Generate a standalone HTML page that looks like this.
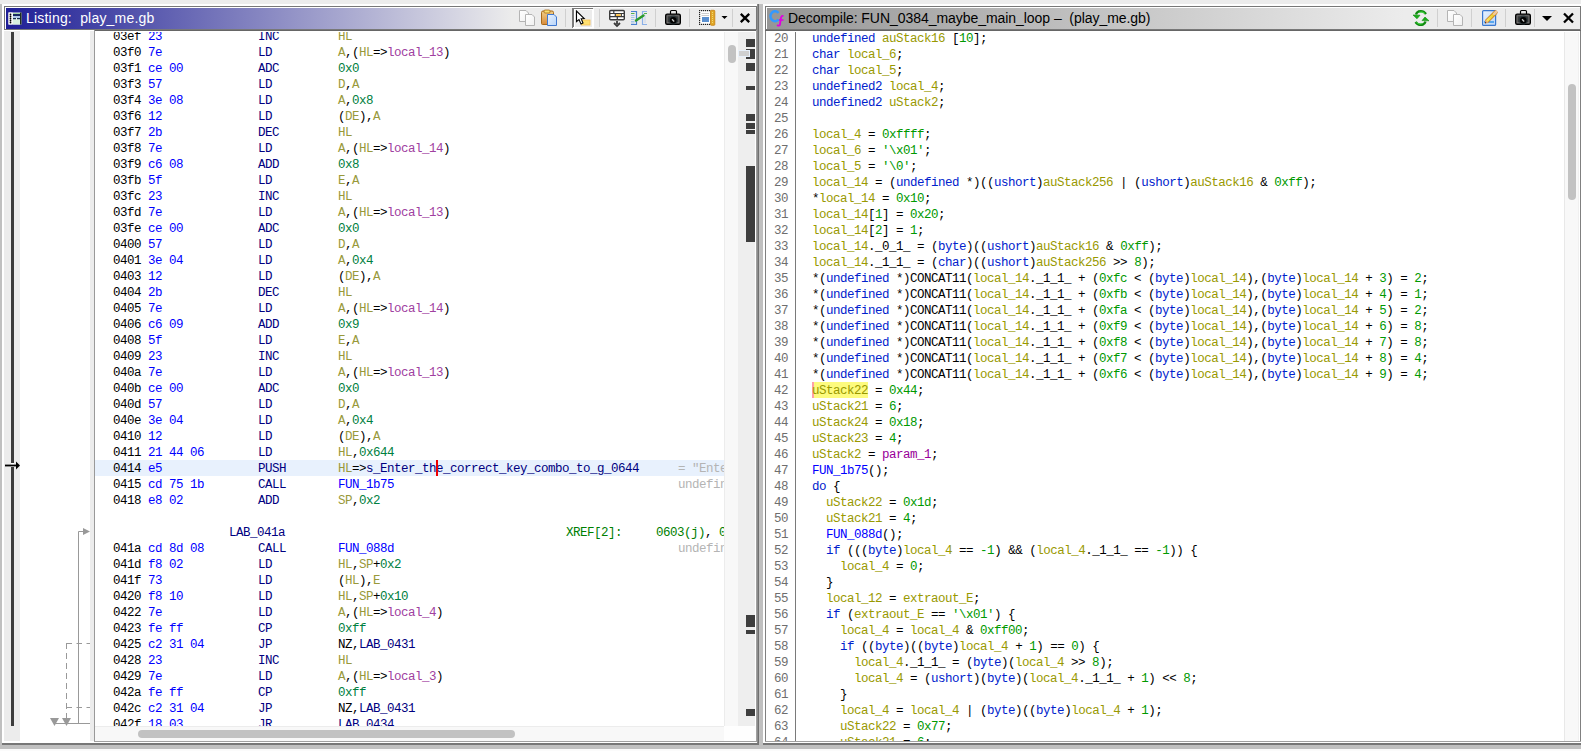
<!DOCTYPE html>
<html><head><meta charset="utf-8">
<style>
html,body{margin:0;padding:0}
body{width:1581px;height:751px;overflow:hidden;position:relative;background:#ececec;font-family:"Liberation Sans",sans-serif}
.a{position:absolute}
.t{position:absolute;white-space:pre;font-family:'Liberation Mono', monospace;font-size:12.5px;letter-spacing:-0.5px;line-height:16px;padding-top:1px;height:16px}
.clip{position:absolute;overflow:hidden}
.ttl{position:absolute;font-family:"Liberation Sans",sans-serif;font-size:14px;white-space:pre}
.sep{position:absolute;top:9px;width:1px;height:18px;background:#c8c8c8}
</style></head><body>
<!-- base frame -->
<div class="a" style="left:0;top:4px;width:2px;height:741px;background:#c0c0c0"></div>
<div class="a" style="left:2px;top:4px;width:1579px;height:741px;background:#fff"></div>
<div class="a" style="left:0;top:745px;width:1581px;height:4px;background:#c0c0c0"></div>
<div class="a" style="left:0;top:749px;width:1581px;height:2px;background:#fbfbfb"></div>
<!-- splitter -->
<div class="a" style="left:757px;top:4px;width:1px;height:741px;background:#8c8c8c"></div>
<div class="a" style="left:758px;top:4px;width:1px;height:741px;background:#707070"></div>
<div class="a" style="left:759px;top:4px;width:4px;height:745px;background:#c0c0c0"></div>
<div class="a" style="left:2px;top:743px;width:757px;height:2px;background:#777"></div>
<div class="a" style="left:763px;top:743px;width:818px;height:2px;background:#777"></div>

<!-- ================= LISTING PANEL ================= -->
<div class="a" style="left:4px;top:6px;width:753px;height:24px;box-sizing:border-box;border:1px solid #787878;background:#fff"></div>
<div class="a" style="left:6px;top:8px;width:750px;height:21px;background:linear-gradient(to right,#1f1f96 0px,#ececec 506px,#ececec 100%)"></div>
<!-- listing icon -->
<svg class="a" style="left:8px;top:12px" width="14" height="13" viewBox="0 0 14 13">
 <rect x="0.5" y="0.5" width="13" height="12" fill="#f0f4f0"/>
 <rect x="0.5" y="0.5" width="4" height="12" fill="#fafafa"/>
 <circle cx="2.5" cy="2.5" r="0.9" fill="#000"/><circle cx="2.5" cy="4.5" r="0.9" fill="#000"/><circle cx="2.5" cy="6.5" r="0.9" fill="#000"/><circle cx="2.5" cy="8.5" r="0.9" fill="#000"/><circle cx="2.5" cy="10.5" r="0.9" fill="#000"/>
 <rect x="5" y="1" width="7" height="1" fill="#a8d8a8"/>
 <rect x="5" y="2" width="7" height="2" fill="#1a2a60"/>
 <rect x="5" y="4" width="7" height="2" fill="#b0c8e8"/>
 <rect x="5" y="6" width="3" height="1.5" fill="#1a3050"/><rect x="9" y="6" width="3" height="1.5" fill="#1a3050"/>
 <rect x="5" y="7.5" width="7" height="5" fill="#d8f0e0"/>
 <rect x="12" y="0.5" width="1.5" height="12" fill="#203020"/>
</svg>
<div class="ttl" id="lt" style="left:26px;top:10px;color:#fff;font-size:14px;letter-spacing:0.2px;line-height:16px">Listing:&nbsp; play_me.gb</div>


<!-- listing content -->
<div class="a" style="left:4px;top:31px;width:16px;height:710px;background:#ececec"></div>
<div class="a" style="left:94px;top:30px;width:663px;height:1px;background:#666"></div>
<div class="a" style="left:11px;top:32px;width:3px;height:694px;background:#3c3c3c"></div>
<div class="a" style="left:11px;top:463px;width:3px;height:4px;background:#fff"></div>
<svg class="a" style="left:4px;top:460px" width="17" height="11" viewBox="0 0 17 11"><rect x="1" y="4.6" width="12" height="1.8" fill="#000"/><path d="M12 1.5 L16 5.5 L12 9.5 Z" fill="#000"/></svg>
<div class="a" style="left:90px;top:31px;width:4px;height:710px;background:#ececec"></div>
<div class="a" style="left:94px;top:30px;width:1px;height:711px;background:#999"></div>
<!-- flow arrows -->
<svg class="a" style="left:40px;top:500px" width="50" height="230" viewBox="0 0 50 230">
 <path d="M38.5 223.5 V31.5 H43" stroke="#999" fill="none"/>
 <path d="M43 28 L50 31.5 L43 35 Z" fill="#999"/>
 <path d="M26.5 143.5 H50" stroke="#999" fill="none" stroke-dasharray="5.5,4.5"/>
 <path d="M26.5 143 V220" stroke="#999" fill="none" stroke-dasharray="6,4"/>
 <path d="M26.5 207.5 H50" stroke="#999" fill="none" stroke-dasharray="5.5,4.5"/>
 <path d="M14.5 223.5 H50" stroke="#999" fill="none"/>
 <path d="M10 218 L19 218 L14.5 226 Z" fill="#999"/>
 <path d="M22 218 L31 218 L26.5 226 Z" fill="#999"/>
</svg>
<div class="clip" style="left:95px;top:32px;width:629px;height:694px">
 <div class="a" style="left:-95px;top:-32px;width:1581px;height:751px">
<div class="t" style="left:113px;top:28px;"><span style="color:#000000">03ef</span></div>
<div class="t" style="left:148px;top:28px;"><span style="color:#0000ff">23</span></div>
<div class="t" style="left:258px;top:28px;"><span style="color:#000080">INC</span></div>
<div class="t" style="left:338px;top:28px;"><span style="color:#99993a">HL</span></div>
<div class="t" style="left:113px;top:44px;"><span style="color:#000000">03f0</span></div>
<div class="t" style="left:148px;top:44px;"><span style="color:#0000ff">7e</span></div>
<div class="t" style="left:258px;top:44px;"><span style="color:#000080">LD</span></div>
<div class="t" style="left:338px;top:44px;"><span style="color:#99993a">A</span>,(<span style="color:#99993a">HL</span>=&gt;<span style="color:#a040a0">local_13</span>)</div>
<div class="t" style="left:113px;top:60px;"><span style="color:#000000">03f1</span></div>
<div class="t" style="left:148px;top:60px;"><span style="color:#0000ff">ce 00</span></div>
<div class="t" style="left:258px;top:60px;"><span style="color:#000080">ADC</span></div>
<div class="t" style="left:338px;top:60px;"><span style="color:#008040">0x0</span></div>
<div class="t" style="left:113px;top:76px;"><span style="color:#000000">03f3</span></div>
<div class="t" style="left:148px;top:76px;"><span style="color:#0000ff">57</span></div>
<div class="t" style="left:258px;top:76px;"><span style="color:#000080">LD</span></div>
<div class="t" style="left:338px;top:76px;"><span style="color:#99993a">D</span>,<span style="color:#99993a">A</span></div>
<div class="t" style="left:113px;top:92px;"><span style="color:#000000">03f4</span></div>
<div class="t" style="left:148px;top:92px;"><span style="color:#0000ff">3e 08</span></div>
<div class="t" style="left:258px;top:92px;"><span style="color:#000080">LD</span></div>
<div class="t" style="left:338px;top:92px;"><span style="color:#99993a">A</span>,<span style="color:#008040">0x8</span></div>
<div class="t" style="left:113px;top:108px;"><span style="color:#000000">03f6</span></div>
<div class="t" style="left:148px;top:108px;"><span style="color:#0000ff">12</span></div>
<div class="t" style="left:258px;top:108px;"><span style="color:#000080">LD</span></div>
<div class="t" style="left:338px;top:108px;">(<span style="color:#99993a">DE</span>),<span style="color:#99993a">A</span></div>
<div class="t" style="left:113px;top:124px;"><span style="color:#000000">03f7</span></div>
<div class="t" style="left:148px;top:124px;"><span style="color:#0000ff">2b</span></div>
<div class="t" style="left:258px;top:124px;"><span style="color:#000080">DEC</span></div>
<div class="t" style="left:338px;top:124px;"><span style="color:#99993a">HL</span></div>
<div class="t" style="left:113px;top:140px;"><span style="color:#000000">03f8</span></div>
<div class="t" style="left:148px;top:140px;"><span style="color:#0000ff">7e</span></div>
<div class="t" style="left:258px;top:140px;"><span style="color:#000080">LD</span></div>
<div class="t" style="left:338px;top:140px;"><span style="color:#99993a">A</span>,(<span style="color:#99993a">HL</span>=&gt;<span style="color:#a040a0">local_14</span>)</div>
<div class="t" style="left:113px;top:156px;"><span style="color:#000000">03f9</span></div>
<div class="t" style="left:148px;top:156px;"><span style="color:#0000ff">c6 08</span></div>
<div class="t" style="left:258px;top:156px;"><span style="color:#000080">ADD</span></div>
<div class="t" style="left:338px;top:156px;"><span style="color:#008040">0x8</span></div>
<div class="t" style="left:113px;top:172px;"><span style="color:#000000">03fb</span></div>
<div class="t" style="left:148px;top:172px;"><span style="color:#0000ff">5f</span></div>
<div class="t" style="left:258px;top:172px;"><span style="color:#000080">LD</span></div>
<div class="t" style="left:338px;top:172px;"><span style="color:#99993a">E</span>,<span style="color:#99993a">A</span></div>
<div class="t" style="left:113px;top:188px;"><span style="color:#000000">03fc</span></div>
<div class="t" style="left:148px;top:188px;"><span style="color:#0000ff">23</span></div>
<div class="t" style="left:258px;top:188px;"><span style="color:#000080">INC</span></div>
<div class="t" style="left:338px;top:188px;"><span style="color:#99993a">HL</span></div>
<div class="t" style="left:113px;top:204px;"><span style="color:#000000">03fd</span></div>
<div class="t" style="left:148px;top:204px;"><span style="color:#0000ff">7e</span></div>
<div class="t" style="left:258px;top:204px;"><span style="color:#000080">LD</span></div>
<div class="t" style="left:338px;top:204px;"><span style="color:#99993a">A</span>,(<span style="color:#99993a">HL</span>=&gt;<span style="color:#a040a0">local_13</span>)</div>
<div class="t" style="left:113px;top:220px;"><span style="color:#000000">03fe</span></div>
<div class="t" style="left:148px;top:220px;"><span style="color:#0000ff">ce 00</span></div>
<div class="t" style="left:258px;top:220px;"><span style="color:#000080">ADC</span></div>
<div class="t" style="left:338px;top:220px;"><span style="color:#008040">0x0</span></div>
<div class="t" style="left:113px;top:236px;"><span style="color:#000000">0400</span></div>
<div class="t" style="left:148px;top:236px;"><span style="color:#0000ff">57</span></div>
<div class="t" style="left:258px;top:236px;"><span style="color:#000080">LD</span></div>
<div class="t" style="left:338px;top:236px;"><span style="color:#99993a">D</span>,<span style="color:#99993a">A</span></div>
<div class="t" style="left:113px;top:252px;"><span style="color:#000000">0401</span></div>
<div class="t" style="left:148px;top:252px;"><span style="color:#0000ff">3e 04</span></div>
<div class="t" style="left:258px;top:252px;"><span style="color:#000080">LD</span></div>
<div class="t" style="left:338px;top:252px;"><span style="color:#99993a">A</span>,<span style="color:#008040">0x4</span></div>
<div class="t" style="left:113px;top:268px;"><span style="color:#000000">0403</span></div>
<div class="t" style="left:148px;top:268px;"><span style="color:#0000ff">12</span></div>
<div class="t" style="left:258px;top:268px;"><span style="color:#000080">LD</span></div>
<div class="t" style="left:338px;top:268px;">(<span style="color:#99993a">DE</span>),<span style="color:#99993a">A</span></div>
<div class="t" style="left:113px;top:284px;"><span style="color:#000000">0404</span></div>
<div class="t" style="left:148px;top:284px;"><span style="color:#0000ff">2b</span></div>
<div class="t" style="left:258px;top:284px;"><span style="color:#000080">DEC</span></div>
<div class="t" style="left:338px;top:284px;"><span style="color:#99993a">HL</span></div>
<div class="t" style="left:113px;top:300px;"><span style="color:#000000">0405</span></div>
<div class="t" style="left:148px;top:300px;"><span style="color:#0000ff">7e</span></div>
<div class="t" style="left:258px;top:300px;"><span style="color:#000080">LD</span></div>
<div class="t" style="left:338px;top:300px;"><span style="color:#99993a">A</span>,(<span style="color:#99993a">HL</span>=&gt;<span style="color:#a040a0">local_14</span>)</div>
<div class="t" style="left:113px;top:316px;"><span style="color:#000000">0406</span></div>
<div class="t" style="left:148px;top:316px;"><span style="color:#0000ff">c6 09</span></div>
<div class="t" style="left:258px;top:316px;"><span style="color:#000080">ADD</span></div>
<div class="t" style="left:338px;top:316px;"><span style="color:#008040">0x9</span></div>
<div class="t" style="left:113px;top:332px;"><span style="color:#000000">0408</span></div>
<div class="t" style="left:148px;top:332px;"><span style="color:#0000ff">5f</span></div>
<div class="t" style="left:258px;top:332px;"><span style="color:#000080">LD</span></div>
<div class="t" style="left:338px;top:332px;"><span style="color:#99993a">E</span>,<span style="color:#99993a">A</span></div>
<div class="t" style="left:113px;top:348px;"><span style="color:#000000">0409</span></div>
<div class="t" style="left:148px;top:348px;"><span style="color:#0000ff">23</span></div>
<div class="t" style="left:258px;top:348px;"><span style="color:#000080">INC</span></div>
<div class="t" style="left:338px;top:348px;"><span style="color:#99993a">HL</span></div>
<div class="t" style="left:113px;top:364px;"><span style="color:#000000">040a</span></div>
<div class="t" style="left:148px;top:364px;"><span style="color:#0000ff">7e</span></div>
<div class="t" style="left:258px;top:364px;"><span style="color:#000080">LD</span></div>
<div class="t" style="left:338px;top:364px;"><span style="color:#99993a">A</span>,(<span style="color:#99993a">HL</span>=&gt;<span style="color:#a040a0">local_13</span>)</div>
<div class="t" style="left:113px;top:380px;"><span style="color:#000000">040b</span></div>
<div class="t" style="left:148px;top:380px;"><span style="color:#0000ff">ce 00</span></div>
<div class="t" style="left:258px;top:380px;"><span style="color:#000080">ADC</span></div>
<div class="t" style="left:338px;top:380px;"><span style="color:#008040">0x0</span></div>
<div class="t" style="left:113px;top:396px;"><span style="color:#000000">040d</span></div>
<div class="t" style="left:148px;top:396px;"><span style="color:#0000ff">57</span></div>
<div class="t" style="left:258px;top:396px;"><span style="color:#000080">LD</span></div>
<div class="t" style="left:338px;top:396px;"><span style="color:#99993a">D</span>,<span style="color:#99993a">A</span></div>
<div class="t" style="left:113px;top:412px;"><span style="color:#000000">040e</span></div>
<div class="t" style="left:148px;top:412px;"><span style="color:#0000ff">3e 04</span></div>
<div class="t" style="left:258px;top:412px;"><span style="color:#000080">LD</span></div>
<div class="t" style="left:338px;top:412px;"><span style="color:#99993a">A</span>,<span style="color:#008040">0x4</span></div>
<div class="t" style="left:113px;top:428px;"><span style="color:#000000">0410</span></div>
<div class="t" style="left:148px;top:428px;"><span style="color:#0000ff">12</span></div>
<div class="t" style="left:258px;top:428px;"><span style="color:#000080">LD</span></div>
<div class="t" style="left:338px;top:428px;">(<span style="color:#99993a">DE</span>),<span style="color:#99993a">A</span></div>
<div class="t" style="left:113px;top:444px;"><span style="color:#000000">0411</span></div>
<div class="t" style="left:148px;top:444px;"><span style="color:#0000ff">21 44 06</span></div>
<div class="t" style="left:258px;top:444px;"><span style="color:#000080">LD</span></div>
<div class="t" style="left:338px;top:444px;"><span style="color:#99993a">HL</span>,<span style="color:#008040">0x644</span></div>
<div style="position:absolute;left:95px;top:460px;width:629px;height:16px;background:#e8f1fd"></div>
<div class="t" style="left:113px;top:460px;"><span style="color:#000000">0414</span></div>
<div class="t" style="left:148px;top:460px;"><span style="color:#0000ff">e5</span></div>
<div class="t" style="left:258px;top:460px;"><span style="color:#000080">PUSH</span></div>
<div class="t" style="left:338px;top:460px;"><span style="color:#99993a">HL</span>=&gt;<span style="color:#000080">s_Enter_the_correct_key_combo_to_g_0644</span></div>
<div class="t" style="left:678px;top:460px;"><span style="color:#b4b4b4">= "Enter_the</span></div>
<div style="position:absolute;left:436px;top:460px;width:2px;height:16px;background:#ee0000"></div>
<div class="t" style="left:113px;top:476px;"><span style="color:#000000">0415</span></div>
<div class="t" style="left:148px;top:476px;"><span style="color:#0000ff">cd 75 1b</span></div>
<div class="t" style="left:258px;top:476px;"><span style="color:#000080">CALL</span></div>
<div class="t" style="left:338px;top:476px;"><span style="color:#0000ff">FUN_1b75</span></div>
<div class="t" style="left:678px;top:476px;"><span style="color:#b4b4b4">undefined</span></div>
<div class="t" style="left:113px;top:492px;"><span style="color:#000000">0418</span></div>
<div class="t" style="left:148px;top:492px;"><span style="color:#0000ff">e8 02</span></div>
<div class="t" style="left:258px;top:492px;"><span style="color:#000080">ADD</span></div>
<div class="t" style="left:338px;top:492px;"><span style="color:#99993a">SP</span>,<span style="color:#008040">0x2</span></div>
<div class="t" style="left:229px;top:524px;"><span style="color:#000080">LAB_041a</span></div>
<div class="t" style="left:566px;top:524px;"><span style="color:#008000">XREF[2]:</span></div>
<div class="t" style="left:656px;top:524px;"><span style="color:#008000">0603(j)</span>,<span style="color:#008000"> 0603</span></div>
<div class="t" style="left:113px;top:540px;"><span style="color:#000000">041a</span></div>
<div class="t" style="left:148px;top:540px;"><span style="color:#0000ff">cd 8d 08</span></div>
<div class="t" style="left:258px;top:540px;"><span style="color:#000080">CALL</span></div>
<div class="t" style="left:338px;top:540px;"><span style="color:#0000ff">FUN_088d</span></div>
<div class="t" style="left:678px;top:540px;"><span style="color:#b4b4b4">undefined</span></div>
<div class="t" style="left:113px;top:556px;"><span style="color:#000000">041d</span></div>
<div class="t" style="left:148px;top:556px;"><span style="color:#0000ff">f8 02</span></div>
<div class="t" style="left:258px;top:556px;"><span style="color:#000080">LD</span></div>
<div class="t" style="left:338px;top:556px;"><span style="color:#99993a">HL</span>,<span style="color:#99993a">SP</span>+<span style="color:#008040">0x2</span></div>
<div class="t" style="left:113px;top:572px;"><span style="color:#000000">041f</span></div>
<div class="t" style="left:148px;top:572px;"><span style="color:#0000ff">73</span></div>
<div class="t" style="left:258px;top:572px;"><span style="color:#000080">LD</span></div>
<div class="t" style="left:338px;top:572px;">(<span style="color:#99993a">HL</span>),<span style="color:#99993a">E</span></div>
<div class="t" style="left:113px;top:588px;"><span style="color:#000000">0420</span></div>
<div class="t" style="left:148px;top:588px;"><span style="color:#0000ff">f8 10</span></div>
<div class="t" style="left:258px;top:588px;"><span style="color:#000080">LD</span></div>
<div class="t" style="left:338px;top:588px;"><span style="color:#99993a">HL</span>,<span style="color:#99993a">SP</span>+<span style="color:#008040">0x10</span></div>
<div class="t" style="left:113px;top:604px;"><span style="color:#000000">0422</span></div>
<div class="t" style="left:148px;top:604px;"><span style="color:#0000ff">7e</span></div>
<div class="t" style="left:258px;top:604px;"><span style="color:#000080">LD</span></div>
<div class="t" style="left:338px;top:604px;"><span style="color:#99993a">A</span>,(<span style="color:#99993a">HL</span>=&gt;<span style="color:#a040a0">local_4</span>)</div>
<div class="t" style="left:113px;top:620px;"><span style="color:#000000">0423</span></div>
<div class="t" style="left:148px;top:620px;"><span style="color:#0000ff">fe ff</span></div>
<div class="t" style="left:258px;top:620px;"><span style="color:#000080">CP</span></div>
<div class="t" style="left:338px;top:620px;"><span style="color:#008040">0xff</span></div>
<div class="t" style="left:113px;top:636px;"><span style="color:#000000">0425</span></div>
<div class="t" style="left:148px;top:636px;"><span style="color:#0000ff">c2 31 04</span></div>
<div class="t" style="left:258px;top:636px;"><span style="color:#000080">JP</span></div>
<div class="t" style="left:338px;top:636px;">NZ,<span style="color:#000080">LAB_0431</span></div>
<div class="t" style="left:113px;top:652px;"><span style="color:#000000">0428</span></div>
<div class="t" style="left:148px;top:652px;"><span style="color:#0000ff">23</span></div>
<div class="t" style="left:258px;top:652px;"><span style="color:#000080">INC</span></div>
<div class="t" style="left:338px;top:652px;"><span style="color:#99993a">HL</span></div>
<div class="t" style="left:113px;top:668px;"><span style="color:#000000">0429</span></div>
<div class="t" style="left:148px;top:668px;"><span style="color:#0000ff">7e</span></div>
<div class="t" style="left:258px;top:668px;"><span style="color:#000080">LD</span></div>
<div class="t" style="left:338px;top:668px;"><span style="color:#99993a">A</span>,(<span style="color:#99993a">HL</span>=&gt;<span style="color:#a040a0">local_3</span>)</div>
<div class="t" style="left:113px;top:684px;"><span style="color:#000000">042a</span></div>
<div class="t" style="left:148px;top:684px;"><span style="color:#0000ff">fe ff</span></div>
<div class="t" style="left:258px;top:684px;"><span style="color:#000080">CP</span></div>
<div class="t" style="left:338px;top:684px;"><span style="color:#008040">0xff</span></div>
<div class="t" style="left:113px;top:700px;"><span style="color:#000000">042c</span></div>
<div class="t" style="left:148px;top:700px;"><span style="color:#0000ff">c2 31 04</span></div>
<div class="t" style="left:258px;top:700px;"><span style="color:#000080">JP</span></div>
<div class="t" style="left:338px;top:700px;">NZ,<span style="color:#000080">LAB_0431</span></div>
<div class="t" style="left:113px;top:716px;"><span style="color:#000000">042f</span></div>
<div class="t" style="left:148px;top:716px;"><span style="color:#0000ff">18 03</span></div>
<div class="t" style="left:258px;top:716px;"><span style="color:#000080">JR</span></div>
<div class="t" style="left:338px;top:716px;"><span style="color:#000080">LAB_0434</span></div>
 </div>
</div>
<!-- v scrollbar -->
<div class="a" style="left:724px;top:32px;width:14px;height:694px;background:#f8f8f8;box-shadow:inset 1px 0 #ececec"></div>
<div class="a" style="left:728px;top:45px;width:8px;height:18px;background:#c2c2c2;border-radius:4px"></div>
<!-- overview bar -->
<div class="a" style="left:738px;top:32px;width:17px;height:694px;background:#eeeeee"></div>
<div class="a" style="left:746px;top:39px;width:9px;height:8px;background:#3e3e3e"></div>
<div class="a" style="left:746px;top:49px;width:9px;height:10px;background:#3e3e3e"></div>
<div class="a" style="left:739px;top:51px;width:10px;height:5px;background:#d0d0d0;box-shadow:0 0 0 1px #e8f0fa"></div>
<div class="a" style="left:746px;top:63px;width:9px;height:8px;background:#3e3e3e"></div>
<div class="a" style="left:746px;top:86px;width:9px;height:4px;background:#3e3e3e"></div>
<div class="a" style="left:746px;top:114px;width:9px;height:7px;background:#3e3e3e"></div>
<div class="a" style="left:746px;top:123px;width:9px;height:6px;background:#3e3e3e"></div>
<div class="a" style="left:746px;top:130px;width:9px;height:4px;background:#3e3e3e"></div>
<div class="a" style="left:746px;top:166px;width:9px;height:76px;background:#3e3e3e"></div>
<div class="a" style="left:746px;top:615px;width:9px;height:12px;background:#3e3e3e"></div>
<div class="a" style="left:746px;top:630px;width:9px;height:4px;background:#3e3e3e"></div>
<div class="a" style="left:746px;top:709px;width:9px;height:7px;background:#3e3e3e"></div>
<!-- h scrollbar -->
<div class="a" style="left:95px;top:726px;width:629px;height:15px;background:#f8f8f8;box-shadow:inset 0 1px #ececec"></div>
<div class="a" style="left:138px;top:730px;width:377px;height:8px;background:#c2c2c2;border-radius:4px"></div>
<div class="a" style="left:724px;top:726px;width:32px;height:15px;background:#fefefe"></div>
<div class="a" style="left:756px;top:30px;width:1px;height:712px;background:#a0a0a0"></div>
<div class="a" style="left:94px;top:741px;width:663px;height:1px;background:#a0a0a0"></div>

<!-- ================= DECOMPILE PANEL ================= -->
<div class="a" style="left:765px;top:6px;width:816px;height:24px;box-sizing:border-box;border:1px solid #787878;background:#fff"></div>
<div class="a" style="left:767px;top:8px;width:813px;height:21px;background:linear-gradient(to right,#969696 0px,#ececec 637px,#ececec 100%)"></div>
<svg class="a" style="left:768px;top:10px" width="18" height="17" viewBox="0 0 18 17">
 <path d="M10.5 3 A4.5 5 0 1 0 10.5 9.5" stroke="#3399ff" stroke-width="2.6" fill="none"/>
 <path d="M15.5 6 C13.5 5.5 13 7 12.8 9 L12 14.5 C11.8 16 10.5 16 9 15" stroke="#e000e0" stroke-width="1.8" fill="none"/>
 <path d="M11 10 H15.5" stroke="#e000e0" stroke-width="1.6"/>
</svg>
<div class="ttl" id="dt" style="left:788px;top:10px;color:#000;font-size:14px;letter-spacing:-0.05px;line-height:16px">Decompile: FUN_0384_maybe_main_loop –&nbsp; (play_me.gb)</div>


<div class="a" style="left:765px;top:30px;width:816px;height:1px;background:#666"></div>
<div class="a" style="left:765px;top:31px;width:1px;height:711px;background:#808080"></div>
<div class="a" style="left:1580px;top:31px;width:1px;height:711px;background:#808080"></div>
<div class="a" style="left:765px;top:741px;width:816px;height:1px;background:#a0a0a0"></div>
<div class="a" style="left:795px;top:32px;width:1px;height:709px;background:#7a7a7a"></div>
<div class="clip" style="left:766px;top:31px;width:798px;height:710px">
 <div class="a" style="left:-766px;top:-31px;width:1581px;height:751px">
<div class="t" style="left:774px;top:30px;"><span style="color:#6e6e6e">20</span></div>
<div class="t" style="left:812px;top:30px;"><span style="color:#0022cc">undefined</span> <span style="color:#999900">auStack16</span> [<span style="color:#009900">10</span>];</div>
<div class="t" style="left:774px;top:46px;"><span style="color:#6e6e6e">21</span></div>
<div class="t" style="left:812px;top:46px;"><span style="color:#0022cc">char</span> <span style="color:#999900">local_6</span>;</div>
<div class="t" style="left:774px;top:62px;"><span style="color:#6e6e6e">22</span></div>
<div class="t" style="left:812px;top:62px;"><span style="color:#0022cc">char</span> <span style="color:#999900">local_5</span>;</div>
<div class="t" style="left:774px;top:78px;"><span style="color:#6e6e6e">23</span></div>
<div class="t" style="left:812px;top:78px;"><span style="color:#0022cc">undefined2</span> <span style="color:#999900">local_4</span>;</div>
<div class="t" style="left:774px;top:94px;"><span style="color:#6e6e6e">24</span></div>
<div class="t" style="left:812px;top:94px;"><span style="color:#0022cc">undefined2</span> <span style="color:#999900">uStack2</span>;</div>
<div class="t" style="left:774px;top:110px;"><span style="color:#6e6e6e">25</span></div>
<div class="t" style="left:812px;top:110px;"></div>
<div class="t" style="left:774px;top:126px;"><span style="color:#6e6e6e">26</span></div>
<div class="t" style="left:812px;top:126px;"><span style="color:#999900">local_4</span> = <span style="color:#009900">0xffff</span>;</div>
<div class="t" style="left:774px;top:142px;"><span style="color:#6e6e6e">27</span></div>
<div class="t" style="left:812px;top:142px;"><span style="color:#999900">local_6</span> = <span style="color:#009900">'\x01'</span>;</div>
<div class="t" style="left:774px;top:158px;"><span style="color:#6e6e6e">28</span></div>
<div class="t" style="left:812px;top:158px;"><span style="color:#999900">local_5</span> = <span style="color:#009900">'\0'</span>;</div>
<div class="t" style="left:774px;top:174px;"><span style="color:#6e6e6e">29</span></div>
<div class="t" style="left:812px;top:174px;"><span style="color:#999900">local_14</span> = (<span style="color:#0022cc">undefined</span> *)((<span style="color:#0022cc">ushort</span>)<span style="color:#999900">auStack256</span> | (<span style="color:#0022cc">ushort</span>)<span style="color:#999900">auStack16</span> &amp; <span style="color:#009900">0xff</span>);</div>
<div class="t" style="left:774px;top:190px;"><span style="color:#6e6e6e">30</span></div>
<div class="t" style="left:812px;top:190px;">*<span style="color:#999900">local_14</span> = <span style="color:#009900">0x10</span>;</div>
<div class="t" style="left:774px;top:206px;"><span style="color:#6e6e6e">31</span></div>
<div class="t" style="left:812px;top:206px;"><span style="color:#999900">local_14</span>[<span style="color:#009900">1</span>] = <span style="color:#009900">0x20</span>;</div>
<div class="t" style="left:774px;top:222px;"><span style="color:#6e6e6e">32</span></div>
<div class="t" style="left:812px;top:222px;"><span style="color:#999900">local_14</span>[<span style="color:#009900">2</span>] = <span style="color:#009900">1</span>;</div>
<div class="t" style="left:774px;top:238px;"><span style="color:#6e6e6e">33</span></div>
<div class="t" style="left:812px;top:238px;"><span style="color:#999900">local_14</span>._0_1_ = (<span style="color:#0022cc">byte</span>)((<span style="color:#0022cc">ushort</span>)<span style="color:#999900">auStack16</span> &amp; <span style="color:#009900">0xff</span>);</div>
<div class="t" style="left:774px;top:254px;"><span style="color:#6e6e6e">34</span></div>
<div class="t" style="left:812px;top:254px;"><span style="color:#999900">local_14</span>._1_1_ = (<span style="color:#0022cc">char</span>)((<span style="color:#0022cc">ushort</span>)<span style="color:#999900">auStack256</span> &gt;&gt; <span style="color:#009900">8</span>);</div>
<div class="t" style="left:774px;top:270px;"><span style="color:#6e6e6e">35</span></div>
<div class="t" style="left:812px;top:270px;">*(<span style="color:#0022cc">undefined</span> *)CONCAT11(<span style="color:#999900">local_14</span>._1_1_ + (<span style="color:#009900">0xfc</span> &lt; (<span style="color:#0022cc">byte</span>)<span style="color:#999900">local_14</span>),(<span style="color:#0022cc">byte</span>)<span style="color:#999900">local_14</span> + <span style="color:#009900">3</span>) = <span style="color:#009900">2</span>;</div>
<div class="t" style="left:774px;top:286px;"><span style="color:#6e6e6e">36</span></div>
<div class="t" style="left:812px;top:286px;">*(<span style="color:#0022cc">undefined</span> *)CONCAT11(<span style="color:#999900">local_14</span>._1_1_ + (<span style="color:#009900">0xfb</span> &lt; (<span style="color:#0022cc">byte</span>)<span style="color:#999900">local_14</span>),(<span style="color:#0022cc">byte</span>)<span style="color:#999900">local_14</span> + <span style="color:#009900">4</span>) = <span style="color:#009900">1</span>;</div>
<div class="t" style="left:774px;top:302px;"><span style="color:#6e6e6e">37</span></div>
<div class="t" style="left:812px;top:302px;">*(<span style="color:#0022cc">undefined</span> *)CONCAT11(<span style="color:#999900">local_14</span>._1_1_ + (<span style="color:#009900">0xfa</span> &lt; (<span style="color:#0022cc">byte</span>)<span style="color:#999900">local_14</span>),(<span style="color:#0022cc">byte</span>)<span style="color:#999900">local_14</span> + <span style="color:#009900">5</span>) = <span style="color:#009900">2</span>;</div>
<div class="t" style="left:774px;top:318px;"><span style="color:#6e6e6e">38</span></div>
<div class="t" style="left:812px;top:318px;">*(<span style="color:#0022cc">undefined</span> *)CONCAT11(<span style="color:#999900">local_14</span>._1_1_ + (<span style="color:#009900">0xf9</span> &lt; (<span style="color:#0022cc">byte</span>)<span style="color:#999900">local_14</span>),(<span style="color:#0022cc">byte</span>)<span style="color:#999900">local_14</span> + <span style="color:#009900">6</span>) = <span style="color:#009900">8</span>;</div>
<div class="t" style="left:774px;top:334px;"><span style="color:#6e6e6e">39</span></div>
<div class="t" style="left:812px;top:334px;">*(<span style="color:#0022cc">undefined</span> *)CONCAT11(<span style="color:#999900">local_14</span>._1_1_ + (<span style="color:#009900">0xf8</span> &lt; (<span style="color:#0022cc">byte</span>)<span style="color:#999900">local_14</span>),(<span style="color:#0022cc">byte</span>)<span style="color:#999900">local_14</span> + <span style="color:#009900">7</span>) = <span style="color:#009900">8</span>;</div>
<div class="t" style="left:774px;top:350px;"><span style="color:#6e6e6e">40</span></div>
<div class="t" style="left:812px;top:350px;">*(<span style="color:#0022cc">undefined</span> *)CONCAT11(<span style="color:#999900">local_14</span>._1_1_ + (<span style="color:#009900">0xf7</span> &lt; (<span style="color:#0022cc">byte</span>)<span style="color:#999900">local_14</span>),(<span style="color:#0022cc">byte</span>)<span style="color:#999900">local_14</span> + <span style="color:#009900">8</span>) = <span style="color:#009900">4</span>;</div>
<div class="t" style="left:774px;top:366px;"><span style="color:#6e6e6e">41</span></div>
<div class="t" style="left:812px;top:366px;">*(<span style="color:#0022cc">undefined</span> *)CONCAT11(<span style="color:#999900">local_14</span>._1_1_ + (<span style="color:#009900">0xf6</span> &lt; (<span style="color:#0022cc">byte</span>)<span style="color:#999900">local_14</span>),(<span style="color:#0022cc">byte</span>)<span style="color:#999900">local_14</span> + <span style="color:#009900">9</span>) = <span style="color:#009900">4</span>;</div>
<div class="t" style="left:774px;top:382px;"><span style="color:#6e6e6e">42</span></div>
<div style="position:absolute;left:812px;top:382px;width:56px;height:16px;background:#fdfb7e"></div>
<div style="position:absolute;left:812px;top:382px;width:2px;height:16px;background:#ffa0a8"></div>
<div class="t" style="left:812px;top:382px;"><span style="color:#999900">uStack22</span> = <span style="color:#009900">0x44</span>;</div>
<div class="t" style="left:774px;top:398px;"><span style="color:#6e6e6e">43</span></div>
<div class="t" style="left:812px;top:398px;"><span style="color:#999900">uStack21</span> = <span style="color:#009900">6</span>;</div>
<div class="t" style="left:774px;top:414px;"><span style="color:#6e6e6e">44</span></div>
<div class="t" style="left:812px;top:414px;"><span style="color:#999900">uStack24</span> = <span style="color:#009900">0x18</span>;</div>
<div class="t" style="left:774px;top:430px;"><span style="color:#6e6e6e">45</span></div>
<div class="t" style="left:812px;top:430px;"><span style="color:#999900">uStack23</span> = <span style="color:#009900">4</span>;</div>
<div class="t" style="left:774px;top:446px;"><span style="color:#6e6e6e">46</span></div>
<div class="t" style="left:812px;top:446px;"><span style="color:#999900">uStack2</span> = <span style="color:#990099">param_1</span>;</div>
<div class="t" style="left:774px;top:462px;"><span style="color:#6e6e6e">47</span></div>
<div class="t" style="left:812px;top:462px;"><span style="color:#0000ff">FUN_1b75</span>();</div>
<div class="t" style="left:774px;top:478px;"><span style="color:#6e6e6e">48</span></div>
<div class="t" style="left:812px;top:478px;"><span style="color:#0022cc">do</span> {</div>
<div class="t" style="left:774px;top:494px;"><span style="color:#6e6e6e">49</span></div>
<div class="t" style="left:812px;top:494px;">  <span style="color:#999900">uStack22</span> = <span style="color:#009900">0x1d</span>;</div>
<div class="t" style="left:774px;top:510px;"><span style="color:#6e6e6e">50</span></div>
<div class="t" style="left:812px;top:510px;">  <span style="color:#999900">uStack21</span> = <span style="color:#009900">4</span>;</div>
<div class="t" style="left:774px;top:526px;"><span style="color:#6e6e6e">51</span></div>
<div class="t" style="left:812px;top:526px;">  <span style="color:#0000ff">FUN_088d</span>();</div>
<div class="t" style="left:774px;top:542px;"><span style="color:#6e6e6e">52</span></div>
<div class="t" style="left:812px;top:542px;">  <span style="color:#0022cc">if</span> (((<span style="color:#0022cc">byte</span>)<span style="color:#999900">local_4</span> == <span style="color:#009900">-1</span>) &amp;&amp; (<span style="color:#999900">local_4</span>._1_1_ == <span style="color:#009900">-1</span>)) {</div>
<div class="t" style="left:774px;top:558px;"><span style="color:#6e6e6e">53</span></div>
<div class="t" style="left:812px;top:558px;">    <span style="color:#999900">local_4</span> = <span style="color:#009900">0</span>;</div>
<div class="t" style="left:774px;top:574px;"><span style="color:#6e6e6e">54</span></div>
<div class="t" style="left:812px;top:574px;">  }</div>
<div class="t" style="left:774px;top:590px;"><span style="color:#6e6e6e">55</span></div>
<div class="t" style="left:812px;top:590px;">  <span style="color:#999900">local_12</span> = <span style="color:#999900">extraout_E</span>;</div>
<div class="t" style="left:774px;top:606px;"><span style="color:#6e6e6e">56</span></div>
<div class="t" style="left:812px;top:606px;">  <span style="color:#0022cc">if</span> (<span style="color:#999900">extraout_E</span> == <span style="color:#009900">'\x01'</span>) {</div>
<div class="t" style="left:774px;top:622px;"><span style="color:#6e6e6e">57</span></div>
<div class="t" style="left:812px;top:622px;">    <span style="color:#999900">local_4</span> = <span style="color:#999900">local_4</span> &amp; <span style="color:#009900">0xff00</span>;</div>
<div class="t" style="left:774px;top:638px;"><span style="color:#6e6e6e">58</span></div>
<div class="t" style="left:812px;top:638px;">    <span style="color:#0022cc">if</span> ((<span style="color:#0022cc">byte</span>)((<span style="color:#0022cc">byte</span>)<span style="color:#999900">local_4</span> + <span style="color:#009900">1</span>) == <span style="color:#009900">0</span>) {</div>
<div class="t" style="left:774px;top:654px;"><span style="color:#6e6e6e">59</span></div>
<div class="t" style="left:812px;top:654px;">      <span style="color:#999900">local_4</span>._1_1_ = (<span style="color:#0022cc">byte</span>)(<span style="color:#999900">local_4</span> &gt;&gt; <span style="color:#009900">8</span>);</div>
<div class="t" style="left:774px;top:670px;"><span style="color:#6e6e6e">60</span></div>
<div class="t" style="left:812px;top:670px;">      <span style="color:#999900">local_4</span> = (<span style="color:#0022cc">ushort</span>)(<span style="color:#0022cc">byte</span>)(<span style="color:#999900">local_4</span>._1_1_ + <span style="color:#009900">1</span>) &lt;&lt; <span style="color:#009900">8</span>;</div>
<div class="t" style="left:774px;top:686px;"><span style="color:#6e6e6e">61</span></div>
<div class="t" style="left:812px;top:686px;">    }</div>
<div class="t" style="left:774px;top:702px;"><span style="color:#6e6e6e">62</span></div>
<div class="t" style="left:812px;top:702px;">    <span style="color:#999900">local_4</span> = <span style="color:#999900">local_4</span> | (<span style="color:#0022cc">byte</span>)((<span style="color:#0022cc">byte</span>)<span style="color:#999900">local_4</span> + <span style="color:#009900">1</span>);</div>
<div class="t" style="left:774px;top:718px;"><span style="color:#6e6e6e">63</span></div>
<div class="t" style="left:812px;top:718px;">    <span style="color:#999900">uStack22</span> = <span style="color:#009900">0x77</span>;</div>
<div class="t" style="left:774px;top:734px;"><span style="color:#6e6e6e">64</span></div>
<div class="t" style="left:812px;top:734px;">    <span style="color:#999900">uStack21</span> = <span style="color:#009900">6</span>;</div>
 </div>
</div>
<div class="a" style="left:1564px;top:32px;width:15px;height:709px;background:#f8f8f8;box-shadow:inset 1px 0 #e8e8e8,inset -1px 0 #f0f0f0"></div>
<div class="a" style="left:1568px;top:84px;width:8px;height:116px;background:#c2c2c2;border-radius:4px"></div>
<svg class="a" style="left:0;top:0" width="1581" height="32" viewBox="0 0 1581 32">
<defs>
 <linearGradient id="gClip" x1="0" y1="0" x2="0" y2="1"><stop offset="0" stop-color="#f0d08a"/><stop offset="1" stop-color="#d88a3a"/></linearGradient>
 <linearGradient id="gBlue" x1="0" y1="0" x2="1" y2="1"><stop offset="0" stop-color="#e8f2ff"/><stop offset="1" stop-color="#b8d4f8"/></linearGradient>
 <linearGradient id="gPage" x1="0" y1="0" x2="1" y2="1"><stop offset="0" stop-color="#ffffff"/><stop offset="1" stop-color="#f0f0f0"/></linearGradient>
 <radialGradient id="gLens" cx="0.5" cy="0.5" r="0.5"><stop offset="0" stop-color="#000"/><stop offset="0.6" stop-color="#1a1a1a"/><stop offset="1" stop-color="#3a4448"/></radialGradient>
 <linearGradient id="gPencil" x1="0" y1="0" x2="1" y2="0"><stop offset="0" stop-color="#f8e860"/><stop offset="1" stop-color="#e8c020"/></linearGradient>
</defs>
<!-- ===== Listing toolbar ===== -->
<!-- copy (disabled) -->
<path d="M519.5 10.5 H526 L528.5 13 V21.5 H519.5 Z" fill="url(#gPage)" stroke="#b4b4b4"/>
<path d="M525.5 14.5 H532 L534.5 17 V25.5 H525.5 Z" fill="url(#gPage)" stroke="#b4b4b4"/>
<!-- paste -->
<path d="M541.5 12.5 Q541.5 11 543 11 H552 Q553.5 11 553.5 12.5 V23.5 Q553.5 24.5 552.5 24.5 H542.5 Q541.5 24.5 541.5 23.5 Z" fill="url(#gClip)" stroke="#a86a18"/>
<rect x="544" y="10" width="6" height="3" rx="1" fill="#f8e070" stroke="#a86a18" stroke-width="0.8"/>
<path d="M547.5 14.5 H554 L556.5 17 V25.5 H547.5 Z" fill="url(#gBlue)" stroke="#4078d0"/>
<rect x="565" y="9" width="1" height="18" fill="#d0d0d0"/>
<!-- toggle button (pressed) -->
<rect x="572" y="8" width="22" height="20" fill="#ececec"/>
<rect x="572" y="8" width="2" height="20" fill="#7a7a7a"/>
<rect x="572" y="8" width="21" height="1" fill="#7a7a7a"/>
<rect x="574" y="9" width="1" height="18" fill="#ffffff"/>
<rect x="574" y="9" width="18" height="1" fill="#ffffff"/>
<rect x="592" y="9" width="2" height="19" fill="#ffffff"/>
<rect x="573" y="27" width="21" height="1.5" fill="#ffffff"/>
<rect x="581.5" y="20" width="8.5" height="5" fill="#ffe070" stroke="#f8c050" stroke-width="0.8"/>
<path d="M576.5 11 V21.5 L579 19.5 L581 24 L583 23 L581.2 18.8 L584.2 18.6 Z" fill="#fff" stroke="#000" stroke-width="1.1" stroke-linejoin="miter"/>
<rect x="599" y="9" width="1" height="18" fill="#d0d0d0"/>
<!-- table with down arrow -->
<rect x="609.7" y="10.5" width="14.6" height="9.3" rx="1" fill="#fff" stroke="#3a3a3a" stroke-width="1.4"/>
<path d="M610 13.5 H624 M610 16.6 H624 M613.8 10.5 V13.5 M617.3 16.6 V19.8 M615.3 13.5 V16.6 M621.3 13.5 V16.6" stroke="#3a3a3a" stroke-width="1.2"/>
<rect x="616" y="14.2" width="4.6" height="1.8" fill="#ffc040"/>
<path d="M617 21 V24 M614 23 L617 26 L620 23" stroke="#3a3a3a" stroke-width="1.8" fill="none"/>
<!-- diff -->
<path d="M631 11.5 H636.5 V24.5 H631" stroke="#4a80d0" stroke-width="1.2" fill="none"/>
<path d="M631 13.5 H634.5" stroke="#50b050" stroke-width="1"/>
<path d="M631 15.5 H634.5 M631 17.5 H634.5 M631 19.5 H634.5 M631 21.5 H634.5 M631 23 H634.5" stroke="#90b8e8" stroke-width="0.8"/>
<path d="M647 11.5 H642.5 V24.5 H647" stroke="#8ab0e8" stroke-width="1.2" fill="none"/>
<path d="M644 13.5 H647" stroke="#50b050" stroke-width="1"/>
<path d="M645 15.5 V23" stroke="#b0c8f0" stroke-width="1.2" stroke-dasharray="1,1"/>
<path d="M636 20.5 L643.5 15.5" stroke="#2a9a2a" stroke-width="2.4" stroke-linecap="round"/>
<rect x="655" y="9" width="1" height="18" fill="#d0d0d0"/>
<!-- camera -->
<path d="M670.5 14 V11.5 Q670.5 10.5 671.5 10.5 H675.5 Q676.5 10.5 676.5 11.5 V14" fill="#e8e8e8" stroke="#000" stroke-width="1.2"/>
<rect x="665.6" y="14.2" width="14.8" height="10.2" rx="1.6" fill="#3a3a3a" stroke="#000" stroke-width="1.2"/>
<rect x="667.0999999999999" y="15.8" width="11.8" height="7" fill="none" stroke="#7a7a7a" stroke-width="0.8"/><circle cx="673.3" cy="20" r="4.6" fill="#2a3438"/><circle cx="673.3" cy="20.3" r="3.3" fill="#000"/>
<path d="M672 19.3 L674.2 21.5" stroke="#c8c8c8" stroke-width="1.3"/>
<rect x="689" y="9" width="1" height="18" fill="#d0d0d0"/>
<!-- layout icon -->
<rect x="700" y="11" width="10" height="13" fill="#fff"/><rect x="699" y="10" width="1.2" height="1.2" fill="#222"/><rect x="699" y="23.8" width="1.2" height="1.2" fill="#222"/><rect x="701" y="10" width="1.2" height="1.2" fill="#222"/><rect x="701" y="23.8" width="1.2" height="1.2" fill="#222"/><rect x="703" y="10" width="1.2" height="1.2" fill="#222"/><rect x="703" y="23.8" width="1.2" height="1.2" fill="#222"/><rect x="705" y="10" width="1.2" height="1.2" fill="#222"/><rect x="705" y="23.8" width="1.2" height="1.2" fill="#222"/><rect x="707" y="10" width="1.2" height="1.2" fill="#222"/><rect x="707" y="23.8" width="1.2" height="1.2" fill="#222"/><rect x="709" y="10" width="1.2" height="1.2" fill="#222"/><rect x="709" y="23.8" width="1.2" height="1.2" fill="#222"/><rect x="699" y="12" width="1.2" height="1.2" fill="#222"/><rect x="699" y="14" width="1.2" height="1.2" fill="#222"/><rect x="699" y="16" width="1.2" height="1.2" fill="#222"/><rect x="699" y="18" width="1.2" height="1.2" fill="#222"/><rect x="699" y="20" width="1.2" height="1.2" fill="#222"/><rect x="699" y="22" width="1.2" height="1.2" fill="#222"/>
<path d="M701.5 13.5 H709 M701.5 15.5 H709" stroke="#c0c0c0" stroke-width="0.8"/>
<rect x="702" y="17" width="7" height="5" fill="#5a90d0"/>
<rect x="710.5" y="10.3" width="4.3" height="15" rx="0.8" fill="#e0a828" stroke="#c88010" stroke-width="0.8"/>
<path d="M712.5 12 V24" stroke="#fff0a0" stroke-width="0.8" stroke-dasharray="0.8,1.2"/>
<path d="M721.5 16 H727.5 L724.5 19 Z" fill="#000"/>
<rect x="732" y="9" width="1" height="18" fill="#d0d0d0"/>
<path d="M740.8 13.9 L749.2 22.1 M749.2 13.9 L740.8 22.1" stroke="#000" stroke-width="2.3"/>

<!-- ===== Decompile toolbar ===== -->
<!-- refresh -->
<path d="M1426 14 Q1423 10 1418.5 11.5 Q1416.5 12.5 1416 14.5" stroke="#108a10" stroke-width="2.4" fill="none"/>
<path d="M1413 15 L1420 15.2 L1417 18.8 Z" fill="#18b018" stroke="#108a10" stroke-width="0.6"/>
<path d="M1415.5 22 Q1418.5 26 1423 24.5 Q1425 23.5 1425.5 21.5" stroke="#108a10" stroke-width="2.4" fill="none"/>
<path d="M1429 20.8 L1422 20.6 L1425 17 Z" fill="#18b018" stroke="#108a10" stroke-width="0.6"/>
<path d="M1425 13.5 Q1422.5 11 1419 12.3" stroke="#40e040" stroke-width="1" fill="none"/>
<path d="M1416.5 22.5 Q1419 25 1422.5 23.7" stroke="#40e040" stroke-width="1" fill="none"/>
<rect x="1437" y="9" width="1" height="18" fill="#d0d0d0"/>
<!-- copy (disabled) -->
<path d="M1447.5 10.5 H1454 L1456.5 13 V21.5 H1447.5 Z" fill="url(#gPage)" stroke="#b4b4b4"/>
<path d="M1453.5 14.5 H1460 L1462.5 17 V25.5 H1453.5 Z" fill="url(#gPage)" stroke="#b4b4b4"/>
<rect x="1471" y="9" width="1" height="18" fill="#d0d0d0"/>
<!-- edit -->
<rect x="1482.6" y="10.6" width="13" height="14.8" rx="1" fill="url(#gBlue)" stroke="#3a78d0" stroke-width="1.2"/>
<rect x="1484" y="21" width="10" height="2" fill="#58a8f0"/>
<path d="M1487 21 L1495.5 12.5" stroke="#c87820" stroke-width="4.2" stroke-linecap="round"/>
<path d="M1487 21 L1495.5 12.5" stroke="url(#gPencil)" stroke-width="2.6" stroke-linecap="round"/>
<path d="M1494.2 13.8 L1496 12" stroke="#f0c8a0" stroke-width="2.6" stroke-linecap="round"/>
<path d="M1484.8 23.6 L1485.8 19.8 L1488.6 22.6 Z" fill="#e8b080"/>
<path d="M1484.8 23.6 L1485.3 21.8 L1486.6 23.1 Z" fill="#402010"/>
<rect x="1505" y="9" width="1" height="18" fill="#d0d0d0"/>
<!-- camera -->
<path d="M1520.5 14 V11.5 Q1520.5 10.5 1521.5 10.5 H1525.5 Q1526.5 10.5 1526.5 11.5 V14" fill="#e8e8e8" stroke="#000" stroke-width="1.2"/>
<rect x="1515.6" y="14.2" width="14.8" height="10.2" rx="1.6" fill="#3a3a3a" stroke="#000" stroke-width="1.2"/>
<rect x="1517.1" y="15.8" width="11.8" height="7" fill="none" stroke="#7a7a7a" stroke-width="0.8"/><circle cx="1523.3" cy="20" r="4.6" fill="#2a3438"/><circle cx="1523.3" cy="20.3" r="3.3" fill="#000"/>
<path d="M1522 19.3 L1524.2 21.5" stroke="#c8c8c8" stroke-width="1.3"/>
<rect x="1534" y="9" width="1" height="18" fill="#d0d0d0"/>
<path d="M1542 16 H1552 L1547 21 Z" fill="#000"/>
<path d="M1564 13.5 L1573 22.5 M1573 13.5 L1564 22.5" stroke="#000" stroke-width="2.3"/>
</svg>

</body></html>
